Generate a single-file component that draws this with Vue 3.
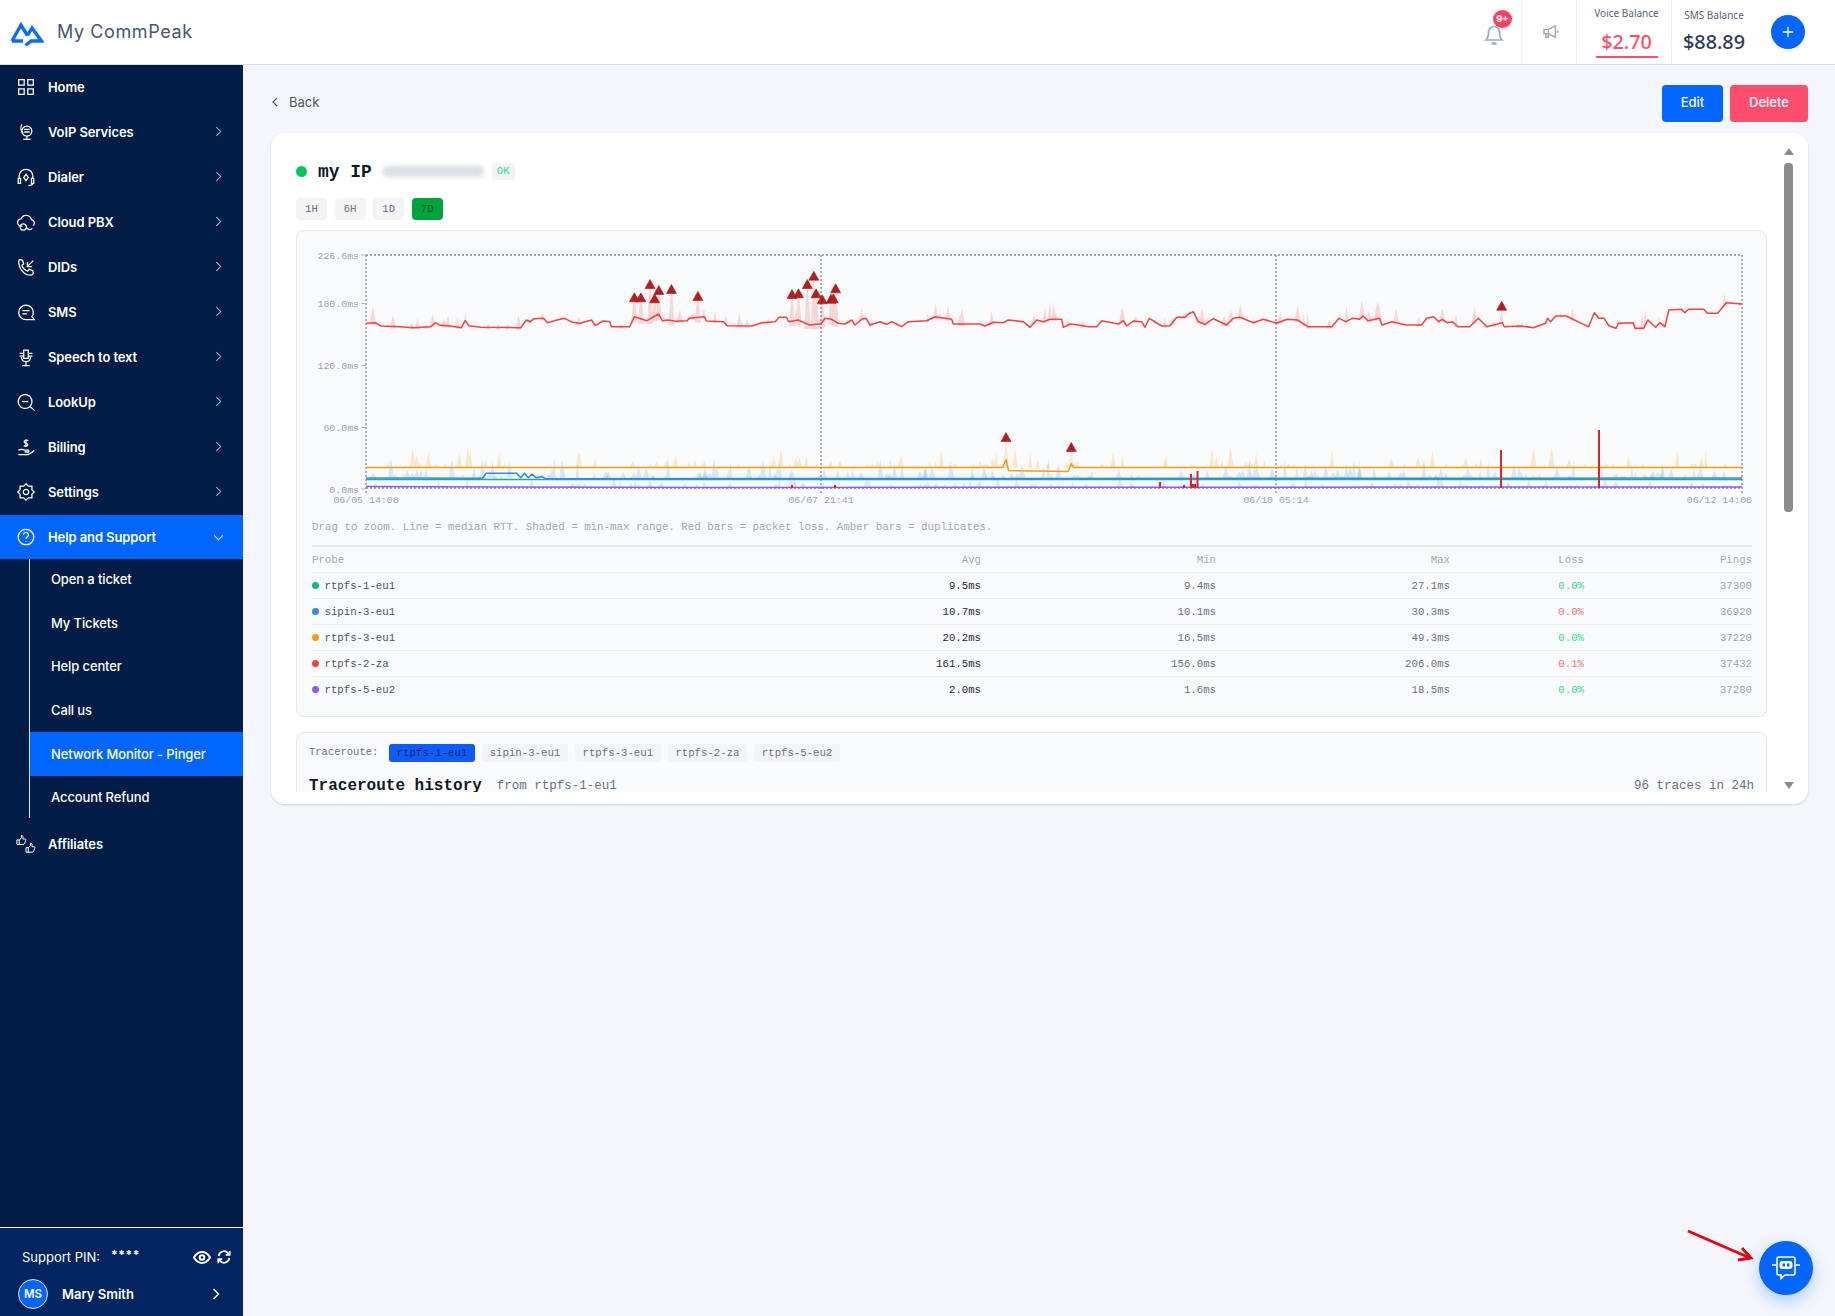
<script setup>
const navTop = [
  { label: 'Home', icon: ['M3 3h6v6H3z', 'M13 3h6v6h-6z', 'M3 13h6v6H3z', 'M13 13h6v6h-6z'] },
  { label: 'VoIP Services', arrow: true, icon: ['M12 4.500a5.500 5.500 0 1 1-.01 0z', 'M6.500 2.500c-1.800 3-1.600 7.500 1.500 10', 'M12 15.500v3', 'M8 19h8', 'M9 8h6M9 11h6'] },
  { label: 'Dialer', arrow: true, icon: ['M3.500 13V10a7.500 7.500 0 0 1 15 0v3', 'M2.500 12.500h2.500v5.500H2.500z', 'M17 12.500h2.500v5.500H17z', 'M11 8l2.500 3.500L11 15l-2.500-3.500z', 'M18.500 18c0 1.500-2 2.500-5 2.500'] },
  { label: 'Cloud PBX', arrow: true, icon: ['M7 15.500H6a4 4 0 0 1-.5-8 6 6 0 0 1 11.500 1 3.800 3.800 0 0 1 2 6.500', 'M8 13a3.500 3.500 0 1 1-.01 0z', 'M12 17.500c1 2 4 2.500 6 .5'] },
  { label: 'DIDs', arrow: true, icon: ['M4 3l3 .5 1.500 4-2 1.500c1 3 3.500 5.500 6.500 6.500l1.500-2 4 1.500.5 3c-.5 1.500-2 2-3 2C9 20 3 13 3 5c0-1 .5-1.500 1-2z', 'M19 4l-6.500 6.500', 'M12.500 5.500v5h5'] },
  { label: 'SMS', arrow: true, icon: ['M11 3.500a8 8 0 0 1 8 8c0 2-.5 3.500-1.500 4.500l2.500 3.500h-9a8 8 0 0 1 0-16z', 'M7 9.500h8M7 13h5'] },
  { label: 'Speech to text', arrow: true, icon: ['M8.500 3.500h5v9h-5z', 'M4 7h4M14 7h4M4 10h4M14 10h4', 'M6 11c0 3 2 5 5 5s5-2 5-5', 'M11 16v4M7 20.500h8'] },
  { label: 'LookUp', arrow: true, icon: ['M10 3a7.500 7.500 0 1 1-.01 0z', 'M6.500 10.500h7', 'M15.500 16l5 4.500'] },
  { label: 'Billing', arrow: true, icon: ['M2.500 14.500c3-1.500 5-1 7 0h4c1 0 1 2 0 2h-4', 'M2.500 19.500h9c3 0 6-2.500 8.500-5', 'M11 2.500v8M13.500 4c-2-1-5-.5-4.500 1.500s4 1 4 3-3 2-4.500 1'] },
  { label: 'Settings', arrow: true, icon: ['M11 2l2.500 2.500h4v4L20 11l-2.500 2.500v4h-4L11 20l-2.500-2.500h-4v-4L2 11l2.500-2.500v-4h4z', 'M11 8a3 3 0 1 1-.01 0z'] },
]
const navHelp = { label: 'Help and Support', icon: ['M11 2.500a8.500 8.500 0 1 1-.01 0z', 'M8.300 8.500a2.700 2.700 0 1 1 4 2.400c-1 .6-1.300 1-1.300 2.100', 'M11 15.300v.8'] }
const subItems = ['Open a ticket', 'My Tickets', 'Help center', 'Call us', 'Network Monitor - Pinger', 'Account Refund']
const navAffiliates = { label: 'Affiliates', icon: ['M1 6.500h2.500v5H1z', 'M3.500 7l2.500-3V1.500c1.500 0 2 1.500 1.500 4h2.500c1 0 1 1 .5 2l-1 3c-.2.8-1 1-2 1H3.500', 'M11 15h2.500v5H11z', 'M13.500 15.500l2.500-3V10c1.500 0 2 1.500 1.500 4h2.500c1 0 1 1 .5 2l-1 3c-.2.8-1 1-2 1h-4.500'] }

const ranges = ['1H', '6H', '1D', '7D']
const traceChips = ['rtpfs-1-eu1', 'sipin-3-eu1', 'rtpfs-3-eu1', 'rtpfs-2-za', 'rtpfs-5-eu2']
const probes = [
  { name: 'rtpfs-1-eu1', color: '#10b981', avg: '9.5ms', min: '9.4ms', max: '27.1ms', loss: '0.0%', bad: false, pings: 37300 },
  { name: 'sipin-3-eu1', color: '#3b82f6', avg: '10.7ms', min: '10.1ms', max: '30.3ms', loss: '0.0%', bad: true, pings: 36920 },
  { name: 'rtpfs-3-eu1', color: '#f59e0b', avg: '20.2ms', min: '16.5ms', max: '49.3ms', loss: '0.0%', bad: false, pings: 37220 },
  { name: 'rtpfs-2-za', color: '#ef4444', avg: '161.5ms', min: '156.0ms', max: '206.0ms', loss: '0.1%', bad: true, pings: 37432 },
  { name: 'rtpfs-5-eu2', color: '#8b5cf6', avg: '2.0ms', min: '1.6ms', max: '18.5ms', loss: '0.0%', bad: false, pings: 37280 },
]

// chart traced from the screenshot, all values in page pixels (svg viewBox is page coords)
const fromA = ([x, y]) => [270 + x / 2.613, 130 + y / 3]
const fromB = ([x, y]) => [780 + x / 3, 230 + y / 3]
const fromC = ([x, y]) => [1270 + x / 2.904, 230 + y / 3]

const redA = [[251,580],[275,578],[290,588],[340,590],[375,593],[420,590],[432,578],[445,586],[470,588],[500,593],[510,572],[520,587],[550,592],[655,593],[670,570],[680,575],[690,566],[715,565],[725,578],[750,570],[770,565],[790,577],[810,580],[840,570],[850,587],[870,573],[888,575],[892,590],[940,590],[952,560],[985,572],[1015,552],[1025,572],[1040,570],[1060,574],[1090,572],[1095,565],[1135,560],[1140,573],[1185,575],[1195,587],[1260,588],[1285,578],[1320,575],[1330,562],[1350,562],[1355,575],[1380,570],[1410,585],[1435,582]]
const redB = [[123,282],[135,265],[155,268],[175,280],[195,282],[215,270],[225,285],[245,268],[258,265],[270,285],[300,275],[320,283],[335,275],[365,290],[385,275],[440,272],[465,260],[515,268],[520,282],[600,282],[615,288],[640,277],[670,278],[685,270],[730,275],[750,292],[770,270],[790,275],[810,268],[845,268],[850,292],[870,282],[895,285],[925,290],[950,290],[965,272],[1015,282],[1030,272],[1040,288],[1060,273],[1085,275],[1095,292],[1108,265],[1145,288],[1170,287],[1190,262],[1215,262],[1225,252],[1240,245],[1255,275],[1275,283],[1300,266],[1340,285],[1360,265],[1380,262],[1420,278],[1450,268],[1490,280]]
const redC = [[18,280],[50,268],[80,270],[110,290],[180,290],[200,265],[220,275],[240,265],[260,268],[270,258],[285,272],[318,265],[325,285],[355,275],[395,285],[440,285],[455,265],[475,260],[490,275],[500,268],[515,278],[530,275],[545,290],[580,290],[605,265],[630,290],[675,278],[680,290],[730,288],[765,293],[800,280],[806,265],[815,275],[830,258],[860,258],[900,278],[925,290],[942,248],[955,265],[970,265],[985,288],[1005,295],[1012,280],[1055,278],[1060,295],[1085,295],[1097,270],[1120,292],[1132,278],[1147,290],[1158,240],[1195,238],[1205,248],[1215,238],[1260,238],[1270,250],[1300,250],[1325,218],[1370,222]]
const redPts = [...redA.map(fromA), ...redB.map(fromB), ...redC.map(fromC)]

function redAt(x) {
  for (let i = 1; i < redPts.length; i++) {
    if (x <= redPts[i][0]) {
      const [x0, y0] = redPts[i - 1]
      const [x1, y1] = redPts[i]
      return y0 + ((y1 - y0) * (x - x0)) / (x1 - x0 || 1)
    }
  }
  return redPts[redPts.length - 1][1]
}
const toPoints = (pts) => pts.map(([x, y]) => `${x.toFixed(1)},${y.toFixed(1)}`).join(' ')

let seed = 4711
function rnd() {
  seed = (seed * 16807) % 2147483647
  return seed / 2147483647
}
function spikes(count, baseAt, minH, maxH) {
  let d = ''
  for (let i = 0; i < count; i++) {
    const x = 367 + rnd() * 1373
    const w = 1.500 + rnd() * 2
    const r = rnd()
    const h = minH + r * r * (maxH - minH)
    const b = baseAt(x)
    d += `M${(x - w).toFixed(1)} ${b.toFixed(1)}L${x.toFixed(1)} ${(b - h).toFixed(1)}L${(x + w).toFixed(1)} ${b.toFixed(1)}Z`
  }
  return d
}

const triA = [[952,502],[969,502],[993,462],[1016,480],[1005,505],[1049,477],[1118,498],[1364,492],[1381,490],[1404,462],[1421,437],[1427,490],[1443,508],[1466,506],[1472,505],[1478,475]]
const triangles = [...triA.map(fromA), [1006, 437], [1071.3, 447], [1501.7, 305.7]]
const triPath = (x, y) => `${x - 5},${y + 4.500} ${x},${y - 4.500} ${x + 5},${y + 4.500}`
const redTall = triA.map(fromA).map(([x, y]) => `M${x - 3} ${redAt(x) + 5}L${x - 0.5} ${y}L${x + 0.5} ${y}L${x + 3} ${redAt(x) + 5}Z`).join('') + `M1499.500 ${redAt(1501)}L1501.500 310L1503.500 ${redAt(1501)}Z`
const redBand = spikes(120, (x) => redAt(x) + 2, 5, 20) + redTall
const orangeBand = spikes(115, () => 468, 4, 22) + 'M1003 468L1006 440L1009 468ZM1069 468L1071.300 450L1074 468Z'
const blueBand = spikes(170, () => 478, 3, 20)
const greenBand = spikes(35, () => 479, 3, 16)
const purpleBand = spikes(110, () => 487.500, 2, 10)

const orangeLine = toPoints([[366, 467.5], [1000, 467.5], [1003, 467], [1006, 459.500], [1008.500, 470.500], [1068, 471.500], [1071.300, 464], [1074, 467.500], [1742, 467.500]])
const bumpA = [[555,1045],[565,1030],[645,1030],[655,1043],[665,1030],[675,1043],[685,1032],[695,1043],[710,1040],[720,1046]]
const blueLine = toPoints([[366, 478], ...bumpA.map(fromA), [1742, 478]])
const greenLine = toPoints([[366, 479.500], [1742, 479.500]])
const purpleLine = toPoints([[366, 486.500], [700, 487.500], [1742, 487]])
const redLine = toPoints(redPts)

const lossBars = [[792, 485], [835, 485], [1160, 482], [1184, 485], [1191, 474], [1193, 484], [1195, 484], [1197.500, 471], [1501, 450], [1599, 430]]
const yLabels = [['226.6ms', 255], ['180.0ms', 303.500], ['120.0ms', 365.500], ['60.0ms', 427.500], ['0.0ms', 489]]
</script>

<template>
  <div class="page">
    <header class="topbar">
      <div class="brand">
        <svg class="logo" viewBox="0 0 34 28" width="34" height="28">
          <path d="M2 23L11 7l6.500 10.500M2 23h11" />
          <path d="M17.500 17.500L22 10l9.500 13H21l-5.500 4.500" />
        </svg>
        <span class="brand-name">My CommPeak</span>
      </div>
      <div class="top-right">
        <div class="top-cell bell-cell">
          <svg viewBox="0 0 24 26" width="24" height="26" class="grey-ic">
            <path d="M4 20c2-2 2.500-4 2.500-8a5.500 5.500 0 0 1 11 0c0 4 .5 6 2.500 8z" />
            <path d="M9.500 23.500h5" stroke-width="2.500" />
          </svg>
          <span class="badge">9+</span>
        </div>
        <div class="top-cell mega-cell">
          <svg viewBox="0 0 18 16" width="16" height="14" class="grey-ic">
            <path d="M1 5h5l8-4v13L6 10H1z" />
            <path d="M6 5v5M3 10v4h3v-4" />
            <path d="M16.500 6v3" />
          </svg>
        </div>
        <div class="top-cell bal-cell voice">
          <span class="bal-label">Voice Balance</span>
          <span class="bal-value red">$2.70</span>
        </div>
        <div class="bal-cell sms">
          <span class="bal-label">SMS Balance</span>
          <span class="bal-value">$88.89</span>
        </div>
        <button class="plus" type="button">
          <svg viewBox="0 0 14 14" width="12" height="12"><path d="M7 1v12M1 7h12" /></svg>
        </button>
      </div>
    </header>

    <div class="body-row">
      <aside class="sidebar">
        <nav class="nav">
          <a v-for="item in navTop" :key="item.label" class="nav-item">
            <svg class="nav-ic" viewBox="0 0 22 22" width="20" height="20"><path v-for="d in item.icon" :key="d" :d="d" /></svg>
            <span>{{ item.label }}</span>
            <svg v-if="item.arrow" class="chev" viewBox="0 0 8 12" width="7" height="11"><path d="M1.500 1l5 5-5 5" /></svg>
          </a>
          <a class="nav-item active">
            <svg class="nav-ic" viewBox="0 0 22 22" width="20" height="20"><path v-for="d in navHelp.icon" :key="d" :d="d" /></svg>
            <span>{{ navHelp.label }}</span>
            <svg class="chev down" viewBox="0 0 12 8" width="11" height="7"><path d="M1 1.500l5 5 5-5" /></svg>
          </a>
          <div class="sub">
            <a v-for="s in subItems" :key="s" class="sub-item" :class="{ current: s.startsWith('Network') }">{{ s }}</a>
          </div>
          <a class="nav-item affiliates">
            <svg class="nav-ic aff" viewBox="0 0 22 22" width="20" height="20"><path v-for="d in navAffiliates.icon" :key="d" :d="d" /></svg>
            <span>{{ navAffiliates.label }}</span>
          </a>
        </nav>
        <div class="side-foot">
          <div class="pin-row">
            <span class="pin-label">Support PIN:</span>
            <span class="pin-value">****</span>
            <svg class="eye" viewBox="0 0 20 14" width="18" height="13">
              <path d="M1 7c2.500-4 5.500-6 9-6s6.500 2 9 6c-2.500 4-5.500 6-9 6s-6.500-2-9-6z" />
              <circle cx="10" cy="7" r="2.600" />
            </svg>
            <svg class="sync" viewBox="0 0 16 16" width="14" height="14">
              <path d="M2 7a6 6 0 0 1 10.500-3.500L14 5" />
              <path d="M14.500 1v4.500H10" />
              <path d="M14 9a6 6 0 0 1-10.500 3.500L2 11" />
              <path d="M1.500 15v-4.500H6" />
            </svg>
          </div>
          <div class="user-row">
            <span class="avatar">MS</span>
            <span class="user-name">Mary Smith</span>
            <svg class="user-chev" viewBox="0 0 8 12" width="8" height="12"><path d="M1.500 1l5 5-5 5" /></svg>
          </div>
        </div>
      </aside>

      <main class="main">
        <div class="toolbar">
          <a class="back">
            <svg viewBox="0 0 6 10" width="6" height="10"><path d="M5 1L1 5l4 4" /></svg>
            Back
          </a>
          <div class="actions">
            <button class="btn edit" type="button">Edit</button>
            <button class="btn delete" type="button">Delete</button>
          </div>
        </div>

        <section class="card">
          <div class="scroller">
            <div class="title-row">
              <span class="status-dot"></span>
              <h1 class="title">my IP</h1>
              <span class="blurred"></span>
              <span class="ok">OK</span>
            </div>
            <div class="range-row">
              <button v-for="r in ranges" :key="r" class="range" :class="{ on: r === '7D' }" type="button">{{ r }}</button>
            </div>

            <div class="panel chart-panel">
              <svg class="chart" viewBox="297 231 1469 288" width="1469" height="288">
                <g class="bands">
                  <path :d="redBand" fill="#ef4444" opacity="0.2" />
                  <path :d="orangeBand" fill="#f59e0b" opacity="0.2" />
                  <path :d="greenBand" fill="#10b981" opacity="0.2" />
                  <path :d="blueBand" fill="#3b82f6" opacity="0.17" />
                  <path :d="purpleBand" fill="#8b5cf6" opacity="0.17" />
                </g>
                <g class="frame">
                  <path d="M366 255H1742M366 488H1742M366 255V494M821 255V494M1276 255V494M1742 255V494" />
                </g>
                <path v-for="l in yLabels" :key="l[0]" class="tick" :d="`M361 ${l[1]}H366`" />
                <polyline :points="greenLine" class="ln" stroke="#10b981" />
                <polyline :points="blueLine" class="ln" stroke="#3b82f6" />
                <polyline :points="orangeLine" class="ln" stroke="#f59e0b" />
                <polyline :points="purpleLine" class="ln" stroke="#8b5cf6" />
                <polyline :points="redLine" class="ln" stroke="#ef4444" />
                <rect v-for="b in lossBars" :key="b[0]" :x="b[0] - 1" :y="b[1]" width="2" :height="488 - b[1]" fill="#dc2626" />
                <polygon v-for="t in triangles" :key="t[0]" :points="triPath(t[0], t[1])" fill="#b91c1c" stroke="#991b1b" stroke-width="0.6" />
                <text v-for="l in yLabels" :key="l[0]" class="ax" x="359" :y="l[1] + 3.500" text-anchor="end">{{ l[0] }}</text>
                <text class="ax" x="366" y="503" text-anchor="middle">06/05 14:08</text>
                <text class="ax" x="821" y="503" text-anchor="middle">06/07 21:41</text>
                <text class="ax" x="1276" y="503" text-anchor="middle">06/10 05:14</text>
                <text class="ax" x="1752" y="503" text-anchor="end">06/12 14:08</text>
              </svg>
              <p class="hint">Drag to zoom. Line = median RTT. Shaded = min-max range. Red bars = packet loss. Amber bars = duplicates.</p>
              <div class="tbl">
                <div class="tr head">
                  <span>Probe</span><span class="num">Avg</span><span class="num">Min</span><span class="num">Max</span><span class="num">Loss</span><span class="num">Pings</span>
                </div>
                <div v-for="p in probes" :key="p.name" class="tr">
                  <span class="probe"><i class="dot" :style="{ background: p.color }"></i>{{ p.name }}</span>
                  <span class="num avg">{{ p.avg }}</span>
                  <span class="num soft">{{ p.min }}</span>
                  <span class="num soft">{{ p.max }}</span>
                  <span class="num" :class="p.bad ? 'loss-bad' : 'loss-ok'">{{ p.loss }}</span>
                  <span class="num faint">{{ p.pings }}</span>
                </div>
              </div>
            </div>

            <div class="panel trace-panel">
              <div class="chips">
                <span class="trace-label">Traceroute:</span>
                <span v-for="c in traceChips" :key="c" class="chip" :class="{ on: c === 'rtpfs-1-eu1' }">{{ c }}</span>
              </div>
              <div class="trace-head">
                <h2 class="trace-title">Traceroute history</h2>
                <span class="trace-from">from rtpfs-1-eu1</span>
                <span class="trace-count">96 traces in 24h</span>
              </div>
            </div>
          </div>

          <div class="scrollbar">
            <span class="sb-up"></span>
            <span class="sb-thumb"></span>
            <span class="sb-down"></span>
          </div>
        </section>
      </main>
    </div>

    <svg class="pointer" viewBox="0 0 70 34" width="70" height="34">
      <path d="M2 2l62 27" />
      <path d="M56 19l9 10-13 2" />
    </svg>
    <button class="chat" type="button">
      <svg viewBox="0 0 30 26" width="30" height="26">
        <path class="bot-line" d="M8 2h14a2 2 0 0 1 2 2v14a2 2 0 0 1-2 2H14l-4 3.500V20H8a2 2 0 0 1-2-2V4a2 2 0 0 1 2-2z" />
        <rect x="8.500" y="6" width="13" height="8" rx="3" fill="#fff" />
        <rect x="11.500" y="8.500" width="2.500" height="3" fill="#0066ff" />
        <rect x="16" y="8.500" width="2.500" height="3" fill="#0066ff" />
        <path class="bot-line" d="M1 10h4M25 10h4" />
      </svg>
    </button>
  </div>
</template>

<style>
html, body { margin: 0; background: #f4f6fb; }
</style>

<style scoped>
* { box-sizing: border-box; }

.page {
  position: relative;
  width: 100%;
  height: 100vh;
  overflow: hidden;
  display: flex;
  flex-direction: column;
  background: #f4f6fb;
  font-family: Inter, "Liberation Sans", sans-serif;
}

.topbar {
  height: 65px;
  flex: none;
  display: flex;
  align-items: center;
  background: #fff;
  border-bottom: 1px solid #d5dcea;
}
.brand { display: flex; align-items: center; padding-left: 10px; margin-top: -1px; }
.logo { fill: none; stroke: #0b6bff; stroke-width: 3.400; }
.brand-name { margin-left: 13px; font-size: 18px; color: #4a5470; letter-spacing: 0.6px; }

.top-right { margin-left: auto; display: flex; align-items: stretch; height: 64px; padding-right: 30px; }
.top-cell { border-right: 1px solid #e8edf4; display: flex; align-items: center; justify-content: center; position: relative; }
.bell-cell { width: 55px; padding-top: 2px; }
.mega-cell { width: 55px; padding-left: 4px; }
.grey-ic { fill: none; stroke: #a3abb8; stroke-width: 1.700; }
.badge {
  position: absolute; left: 26px; top: 10px;
  width: 19px; height: 18px; border-radius: 50%;
  background: #ff3f5f; color: #fff;
  font-size: 9.500px; font-weight: 700; line-height: 18px; text-align: center;
}
.bal-cell {
  display: flex; flex-direction: column; align-items: center; justify-content: flex-start;
  font-family: "Noto Sans", sans-serif;
}
.voice { width: 95px; padding-left: 5px; }
.sms { width: 88px; padding-right: 4px; }
.bal-label { margin-top: 6px; font-size: 10px; line-height: 14px; color: #5a6178; white-space: nowrap; }
.sms .bal-label { margin-top: 8px; }
.bal-value { font-size: 19.800px; font-weight: 500; line-height: 26px; color: #2f3a5f; margin-top: 9px; }
.sms .bal-value { margin-top: 7px; }
.bal-value.red { color: #ff4d6d; border-bottom: 2px solid #ff4d6d; padding-bottom: 2px; width: 62px; text-align: center; line-height: 24px; margin-top: 10px; }
.plus {
  align-self: center; width: 34px; height: 34px; margin-left: 11px;
  border: 0; border-radius: 50%; background: #0066ff;
  display: flex; align-items: center; justify-content: center; padding: 0;
}
.plus path { stroke: #fff; stroke-width: 1.500; fill: none; }

.body-row { flex: 1; display: flex; min-height: 0; }

.sidebar {
  width: 243px; flex: none;
  display: flex; flex-direction: column;
  background: #001c47;
  color: #fff;
}
.nav { display: flex; flex-direction: column; flex: 1; }
.nav-item {
  height: 45px; flex: none; position: relative;
  display: flex; align-items: center;
  padding-left: 16px; padding-bottom: 2px;
  font-size: 13px; font-weight: 600; letter-spacing: -0.1px;
}
.nav-ic { flex: none; margin-right: 12px; fill: none; stroke: #fff; stroke-width: 1.400; }
.chev { position: absolute; right: 21px; fill: none; stroke: #a9b4c6; stroke-width: 1.200; }
.chev.down { right: 19px; stroke: #d5dff0; }
.nav-item.active { height: 44px; background: #0066ff; padding-bottom: 0; }
.sub {
  margin-left: 29px; border-left: 1px solid #d9e3f5;
  display: flex; flex-direction: column;
  height: 259px;
}
.sub-item {
  height: 43.500px; flex: none;
  display: flex; align-items: center;
  padding-left: 21px;
  font-size: 13px; font-weight: 500; letter-spacing: -0.12px;
}
.sub-item:first-child { margin-top: -1.500px; }
.sub-item.current { background: #0066ff; height: 44px; }
.affiliates { margin-top: 3px; padding-bottom: 0; }
.aff { stroke-width: 1.100; }

.side-foot {
  height: 89px; flex: none;
  background: #002561;
  border-top: 1px solid #fff;
  padding: 19px 0 0 18px;
}
.pin-row { display: flex; align-items: center; height: 20px; padding-left: 4px; font-size: 13px; }
.pin-value { margin-left: 11px; font-weight: 700; font-size: 12px; position: relative; top: -3px; letter-spacing: 0.5px; }
.eye { margin-left: 53px; fill: none; stroke: #fff; stroke-width: 2.200; }
.sync { margin-left: 6px; fill: none; stroke: #fff; stroke-width: 2; }
.user-row { display: flex; align-items: center; margin-top: 12px; }
.avatar {
  width: 30px; height: 30px; border-radius: 50%;
  background: #0066ff; border: 1px solid #dfe8f8; margin-left: 0;
  display: flex; align-items: center; justify-content: center;
  font-size: 11.500px; font-weight: 600;
}
.user-name { margin-left: 14px; font-size: 13px; font-weight: 600; }
.user-chev { margin-left: auto; margin-right: 23px; fill: none; stroke: #fff; stroke-width: 1.500; }

.main { flex: 1; min-width: 0; padding: 20px 27px 0 28px; }
.toolbar { height: 37px; display: flex; align-items: center; justify-content: space-between; }
.back { display: flex; align-items: center; gap: 11px; font-size: 13px; color: #4a5470; padding-left: 1px; margin-bottom: 3px; }
.back svg { fill: none; stroke: #4a5470; stroke-width: 1.200; }
.actions { display: flex; gap: 7px; }
.btn {
  height: 37px; border: 0; border-radius: 4px; color: #fff;
  font-family: inherit; font-size: 13px; font-weight: 500; padding: 0 0 3px;
}
.edit { width: 61px; background: #0066ff; }
.delete { width: 78px; background: #ff4d6d; }

.card {
  margin-top: 11px; height: 671px;
  background: #fff; border-radius: 14px;
  box-shadow: 0 1px 2px rgba(120, 135, 165, 0.35);
  display: flex; align-items: flex-start;
  padding: 12px 9px 12px 25px;
  font-family: "Liberation Mono", monospace;
}
.scroller { width: 1471px; height: 647px; overflow: hidden; flex: none; padding-top: 15px; }

.title-row { height: 22px; display: flex; align-items: center; }
.status-dot { width: 11px; height: 11px; border-radius: 50%; background: #00c853; }
.title { margin: 0 0 0 11px; padding-top: 1px; font-size: 17.900px; line-height: 22px; font-weight: 700; color: #111827; }
.blurred { width: 100px; height: 11px; margin-left: 11px; background: #dcdfe3; border-radius: 3px; filter: blur(2px); }
.ok {
  margin-left: 9px; width: 23px; height: 17px;
  background: #f3f4f6; border-radius: 3px;
  color: #1fe28f; font-size: 10.700px; line-height: 17px; text-align: center;
}
.range-row { display: flex; gap: 7.600px; margin-top: 16px; height: 22px; }
.range {
  width: 31px; height: 22px; padding: 0;
  border: 0; border-radius: 4px;
  background: #f3f4f6; color: #6b7280;
  font-family: inherit; font-size: 10.700px;
}
.range.on { background: #00a33c; color: #075c2a; }

.panel { background: #f9fafb; border: 1px solid #e5e7eb; border-radius: 8px; }
.chart-panel { margin-top: 10px; height: 487px; padding: 0 14px 0 15px; }
.chart { display: block; margin: 0 -14px 0 -15px; }
.frame path { fill: none; stroke: #8a8a8a; stroke-width: 1.300; stroke-dasharray: 2 2; }
.tick { stroke: #b6bac2; stroke-width: 1; fill: none; }
.ln { fill: none; stroke-width: 1.500; stroke-linejoin: round; }
.ax { font-size: 9.900px; fill: #9ca3af; font-family: "Liberation Mono", monospace; }
.hint { margin: 0; height: 16px; font-size: 10.800px; line-height: 16px; color: #a3a9b4; white-space: nowrap; }

.tbl { margin-top: 10px; border-top: 2px solid #e5e7eb; font-size: 10.700px; }
.tr {
  height: 26px;
  display: grid; grid-template-columns: 1fr 100px 235px 234px 134px 168px;
  align-items: center;
  border-top: 1px solid #eceef1;
  color: #374151;
}
.tr.head { height: 25px; border-top: 0; color: #a3a9b4; }
.num { text-align: right; }
.probe { display: flex; align-items: center; color: #4b5563; }
.dot { width: 7px; height: 7px; border-radius: 50%; margin-right: 5.500px; }
.tr:not(.head) .avg { color: #1f2937; }
.tr .soft { color: #6b7280; }
.tr .faint { color: #9ca3af; }
.tr .loss-ok { color: #1fe28f; }
.tr .loss-bad { color: #ff6b74; }
.tr.head .num { color: #a3a9b4; }

.trace-panel { margin-top: 15px; height: 120px; padding: 11px 12px 0 12px; }
.chips { display: flex; align-items: center; height: 18px; gap: 7.300px; }
.trace-label { width: 74px; margin-right: -1px; font-size: 10.500px; color: #6b7280; position: relative; top: -1.500px; white-space: nowrap; }
.chip {
  height: 18px; padding: 0 7.500px;
  background: #f3f4f6; border-radius: 3px;
  font-size: 10.700px; line-height: 18px; color: #6b7280;
}
.chip.on { background: #0d5cfb; color: #0b2a6a; }
.trace-head { display: flex; align-items: center; height: 20px; margin-top: 14px; }
.trace-title { margin: 0; font-size: 16px; line-height: 20px; font-weight: 700; color: #111827; }
.trace-from { margin-left: 15px; font-size: 12.500px; color: #6b7280; }
.trace-count { margin-left: auto; font-size: 12.500px; color: #6b7280; }

.scrollbar {
  width: 21px; height: 646px; margin-left: 11px; flex: none;
  display: flex; flex-direction: column; align-items: center;
  position: relative;
}
.sb-up, .sb-down { width: 0; height: 0; border-left: 5px solid transparent; border-right: 5px solid transparent; }
.sb-up { margin-top: 3px; border-bottom: 7px solid #8c8c8c; }
.sb-thumb { width: 9px; height: 349px; margin-top: 8px; border-radius: 4px; background: #8c8c8c; }
.sb-down { margin-top: auto; margin-bottom: 2px; border-top: 7px solid #8c8c8c; }

.pointer { position: absolute; left: 1686px; top: 1229px; fill: none; stroke: #e8000d; stroke-width: 2.800; }
.chat {
  position: absolute; left: 1759px; top: 1241px;
  width: 54px; height: 54px; padding: 0; border: 0; border-radius: 50%;
  background: #0066ff;
  box-shadow: 0 6px 16px rgba(0, 102, 255, 0.3);
  display: flex; align-items: center; justify-content: center;
}
.bot-line { fill: none; stroke: #fff; stroke-width: 1.600; }
</style>
